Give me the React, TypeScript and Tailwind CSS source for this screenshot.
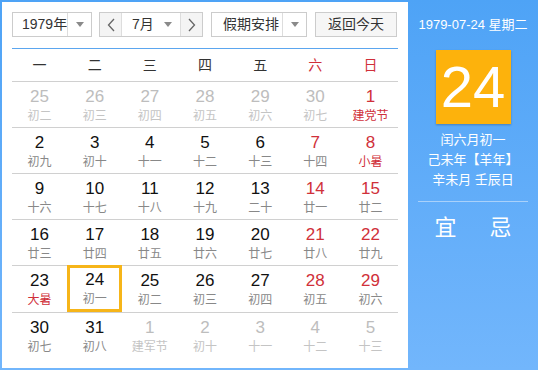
import React from 'react';

type Day = {
  n: number;
  lunar: string;
  other?: boolean;
  redNum?: boolean;
  redLunar?: boolean;
  today?: boolean;
};

const rows: Day[][] = [
  [
    { n: 25, lunar: '初二', other: true },
    { n: 26, lunar: '初三', other: true },
    { n: 27, lunar: '初四', other: true },
    { n: 28, lunar: '初五', other: true },
    { n: 29, lunar: '初六', other: true },
    { n: 30, lunar: '初七', other: true },
    { n: 1, lunar: '建党节', redNum: true, redLunar: true },
  ],
  [
    { n: 2, lunar: '初九' },
    { n: 3, lunar: '初十' },
    { n: 4, lunar: '十一' },
    { n: 5, lunar: '十二' },
    { n: 6, lunar: '十三' },
    { n: 7, lunar: '十四', redNum: true },
    { n: 8, lunar: '小暑', redNum: true, redLunar: true },
  ],
  [
    { n: 9, lunar: '十六' },
    { n: 10, lunar: '十七' },
    { n: 11, lunar: '十八' },
    { n: 12, lunar: '十九' },
    { n: 13, lunar: '二十' },
    { n: 14, lunar: '廿一', redNum: true },
    { n: 15, lunar: '廿二', redNum: true },
  ],
  [
    { n: 16, lunar: '廿三' },
    { n: 17, lunar: '廿四' },
    { n: 18, lunar: '廿五' },
    { n: 19, lunar: '廿六' },
    { n: 20, lunar: '廿七' },
    { n: 21, lunar: '廿八', redNum: true },
    { n: 22, lunar: '廿九', redNum: true },
  ],
  [
    { n: 23, lunar: '大暑', redLunar: true },
    { n: 24, lunar: '初一', today: true },
    { n: 25, lunar: '初二' },
    { n: 26, lunar: '初三' },
    { n: 27, lunar: '初四' },
    { n: 28, lunar: '初五', redNum: true },
    { n: 29, lunar: '初六', redNum: true },
  ],
  [
    { n: 30, lunar: '初七' },
    { n: 31, lunar: '初八' },
    { n: 1, lunar: '建军节', other: true },
    { n: 2, lunar: '初十', other: true },
    { n: 3, lunar: '十一', other: true },
    { n: 4, lunar: '十二', other: true },
    { n: 5, lunar: '十三', other: true },
  ],
];

const weekdays = ['一', '二', '三', '四', '五', '六', '日'];

function Caret() {
  return <span className="block w-0 h-0 border-x-[4px] border-x-transparent border-t-[5px] border-t-[#8a8a8a]" />;
}

function Chevron({ dir }: { dir: 'left' | 'right' }) {
  return (
    <svg width="8" height="14" viewBox="0 0 8 14" fill="none" stroke="#666" strokeWidth="1.3">
      {dir === 'left' ? <path d="M7 1 L1.5 7 L7 13" /> : <path d="M1 1 L6.5 7 L1 13" />}
    </svg>
  );
}

function DayCell({ d }: { d: Day }) {
  const numColor = d.other ? 'text-[#bdbdbd]' : d.redNum ? 'text-[#d0303a]' : 'text-[#111]';
  const lunarColor = d.redLunar ? 'text-[#d0303a]' : d.other ? 'text-[#c4c4c4]' : 'text-[#888]';
  return (
    <div
      className={`flex flex-col items-center h-[45px] ${
        d.today ? 'border-[3px] border-[#f6b519] pt-[2px] -mt-[1px] h-[47px]' : 'pt-[5px]'
      }`}
    >
      <span className={`text-[17px] leading-[20px] ${numColor}`}>{d.n}</span>
      <span className={`text-[12px] leading-[16px] mt-[1px] whitespace-nowrap ${lunarColor}`}>{d.lunar}</span>
    </div>
  );
}

export default function App() {
  return (
    <div
      className="w-[538px] h-[370px] flex pt-[2px] pl-[2px] pb-[2px] bg-gradient-to-b from-[#4ea3f6] to-[#72b6fc]"
      style={{ fontFamily: '"Liberation Sans", "Noto Sans CJK SC", sans-serif' }}
    >
      {/* calendar */}
      <div className="w-[406px] h-[366px] bg-white px-[10px] pt-[10px]">
        {/* controls */}
        <div className="flex items-center h-[25px] text-[14px] text-[#333] whitespace-nowrap">
          <div className="flex w-[80px] h-[25px] border border-[#ccc] bg-white">
            <span className="flex-1 pl-[9px] leading-[23px]">1979年</span>
            <span className="w-[24px] shrink-0 border-l border-[#ddd] flex items-center justify-center">
              <Caret />
            </span>
          </div>
          <div className="flex w-[104px] h-[25px] ml-[7px] border border-[#ccc] bg-white">
            <span className="w-[22px] bg-[#f4f4f4] border-r border-[#ddd] flex items-center justify-center">
              <Chevron dir="left" />
            </span>
            <span className="flex-1 flex items-center pl-[10px] pr-[8px]">
              <span className="flex-1 leading-[23px]">7月</span>
              <Caret />
            </span>
            <span className="w-[22px] bg-[#f4f4f4] border-l border-[#ddd] flex items-center justify-center">
              <Chevron dir="right" />
            </span>
          </div>
          <div className="flex w-[96px] h-[25px] ml-[8px] border border-[#ccc] bg-white">
            <span className="flex-1 pl-[11px] leading-[23px]">假期安排</span>
            <span className="w-[24px] shrink-0 border-l border-[#ddd] flex items-center justify-center">
              <Caret />
            </span>
          </div>
          <div className="w-[82px] h-[25px] ml-[8px] border border-[#ccc] bg-[#f6f6f6] text-center leading-[23px]">
            返回今天
          </div>
        </div>

        {/* header */}
        <div className="mt-[11px] border-t border-[#5ba6ef] grid grid-cols-7 h-[34px] items-center border-b border-b-[#d0d0d0] text-[14px]">
          {weekdays.map((w, i) => (
            <span key={w} className={`text-center ${i >= 5 ? 'text-[#d0303a]' : 'text-[#333]'}`}>
              {w}
            </span>
          ))}
        </div>

        {/* days */}
        {rows.map((row, ri) => (
          <div
            key={ri}
            className={`grid grid-cols-7 ${ri < rows.length - 1 ? 'border-b border-[#d0d0d0]' : ''}`}
          >
            {row.map((d, ci) => (
              <DayCell key={ci} d={d} />
            ))}
          </div>
        ))}
      </div>

      {/* side panel */}
      <div className="flex-1 flex flex-col items-center text-white">
        <div className="mt-[14px] text-[13px] leading-[18px]">1979-07-24 星期二</div>
        <div className="mt-[16px] w-[75px] h-[74px] bg-[#fdb20c] shadow-[0_1px_2px_rgba(0,0,0,0.25)] flex items-center justify-center text-[58px] leading-none">
          24
        </div>
        <div className="mt-[6px] text-[13px] leading-[20px] text-center">
          <div>闰六月初一</div>
          <div>己未年【羊年】</div>
          <div>辛未月 壬辰日</div>
        </div>
        <div className="mt-[11px] w-[110px] h-px bg-[#a9d1fa]" />
        <div className="mt-[13px] flex gap-[33px] text-[22px] leading-[26px]">
          <span>宜</span>
          <span>忌</span>
        </div>
      </div>
    </div>
  );
}
